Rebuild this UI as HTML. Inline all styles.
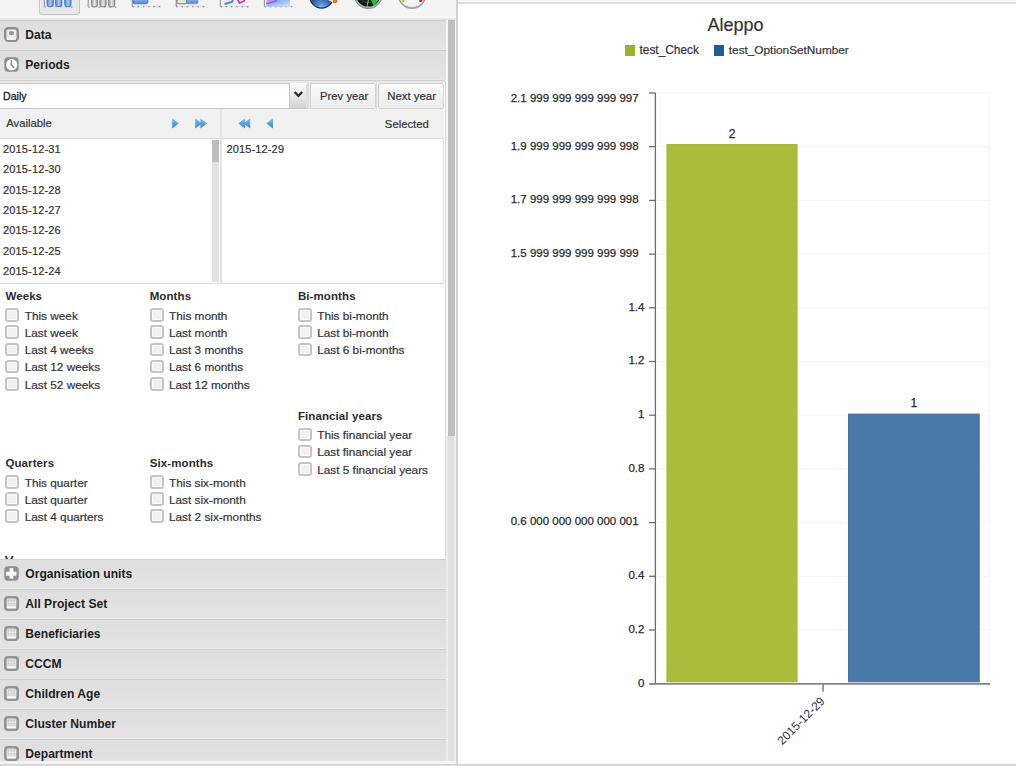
<!DOCTYPE html><html><head><meta charset="utf-8"><style>
html,body{margin:0;padding:0} body{width:1016px;height:766px;overflow:hidden;position:relative;background:#fff;font-family:"Liberation Sans", sans-serif}
.t{position:absolute;white-space:nowrap}
.cb{position:absolute;width:14px;height:13.6px;box-sizing:border-box;border:2px solid #c4c4c4;border-radius:3px;background:#f1f1f1;box-shadow:inset 0 0 0 1px #fbfbfb}
</style></head><body>
<div style="position:absolute;left:0.00px;top:0.00px;width:456.00px;height:15.50px;background:#f3f3f3"></div>
<div style="position:absolute;left:0.00px;top:15.50px;width:456.00px;height:2.50px;background:#f7f7f7"></div>
<div style="position:absolute;left:0.00px;top:18.00px;width:456.00px;height:2.00px;background:linear-gradient(#f0f0f0,#dcdcdc)"></div>
<div style="position:absolute;left:38.80px;top:-2.00px;width:41.50px;height:16.80px;background:#e8e8e8;border:1px solid #c6c6c6;border-radius:0 0 3px 3px;box-sizing:border-box"></div>
<svg style="position:absolute;left:0;top:0" width="456" height="19" viewBox="0 0 456 19"><defs><linearGradient id="bb" x1="0" y1="0" x2="1" y2="0"><stop offset="0" stop-color="#4f86d2"/><stop offset="0.5" stop-color="#a9c8f0"/><stop offset="1" stop-color="#5a8fd8"/></linearGradient><linearGradient id="gg" x1="0" y1="0" x2="1" y2="0"><stop offset="0" stop-color="#9a9a9a"/><stop offset="0.5" stop-color="#e6e6e6"/><stop offset="1" stop-color="#a0a0a0"/></linearGradient><linearGradient id="hb" x1="0" y1="0" x2="0" y2="1"><stop offset="0" stop-color="#a8c6ef"/><stop offset="1" stop-color="#4f86d2"/></linearGradient><linearGradient id="ga" x1="0" y1="0" x2="1" y2="1"><stop offset="0" stop-color="#5d95e6"/><stop offset="1" stop-color="#d5e5fb"/></linearGradient><radialGradient id="gp" cx="0.5" cy="0.95" r="0.6"><stop offset="0" stop-color="#7ec8ec"/><stop offset="0.25" stop-color="#5a8ad0"/><stop offset="1" stop-color="#1c3f80"/></radialGradient></defs><path d="M44.3 0 V6.8" stroke="#888" stroke-width="1"/><path d="M44.3 6.8 H73" stroke="#6e6e6e" stroke-width="1.1" stroke-dasharray="1.5 3.8"/><path d="M44.3 6.3999999999999995 H73" stroke="#c8c8c8" stroke-width="0.6"/><rect x="47.1" y="-4" width="6.2" height="10.6" rx="2.2" fill="url(#bb)" stroke="#3c6fc0" stroke-width="0.9"/><rect x="55.6" y="-4" width="6.2" height="10.6" rx="2.2" fill="url(#bb)" stroke="#3c6fc0" stroke-width="0.9"/><rect x="64.8" y="-4" width="6.2" height="10.6" rx="2.2" fill="url(#bb)" stroke="#3c6fc0" stroke-width="0.9"/><path d="M88.2 0 V7" stroke="#888" stroke-width="1"/><path d="M88.2 7 H117" stroke="#6e6e6e" stroke-width="1.1" stroke-dasharray="1.5 3.8"/><path d="M88.2 6.6 H117" stroke="#c8c8c8" stroke-width="0.6"/><rect x="91.4" y="-4" width="6.2" height="10.8" rx="2.2" fill="url(#gg)" stroke="#7a7a7a" stroke-width="0.9"/><rect x="99.9" y="-4" width="6.2" height="10.8" rx="2.2" fill="url(#gg)" stroke="#7a7a7a" stroke-width="0.9"/><rect x="108.6" y="-4" width="6.2" height="10.8" rx="2.2" fill="url(#gg)" stroke="#7a7a7a" stroke-width="0.9"/><path d="M132.2 0 V6.6" stroke="#888" stroke-width="1"/><path d="M132.2 6.6 H161" stroke="#6e6e6e" stroke-width="1.1" stroke-dasharray="1.5 3.8"/><path d="M132.2 6.199999999999999 H161" stroke="#c8c8c8" stroke-width="0.6"/><rect x="133" y="-3" width="14.8" height="6.8" rx="1.6" fill="url(#hb)" stroke="#3c6fc0" stroke-width="0.9"/><path d="M176.2 0 V6.6" stroke="#888" stroke-width="1"/><path d="M176.2 6.6 H205" stroke="#6e6e6e" stroke-width="1.1" stroke-dasharray="1.5 3.8"/><path d="M176.2 6.199999999999999 H205" stroke="#c8c8c8" stroke-width="0.6"/><rect x="186" y="-3" width="12" height="6.8" rx="1.6" fill="url(#hb)" stroke="#6d9ad8" stroke-width="0.8"/><rect x="177" y="-3" width="9.5" height="6.8" rx="1.2" fill="#e4e4e4" stroke="#6a6a6a" stroke-width="0.9"/><path d="M220.3 0 V6.6" stroke="#888" stroke-width="1"/><path d="M220.3 6.6 H249" stroke="#6e6e6e" stroke-width="1.1" stroke-dasharray="1.5 3.8"/><path d="M220.3 6.199999999999999 H249" stroke="#c8c8c8" stroke-width="0.6"/><path d="M224.5 4 L232 2 L233 -1" stroke="#3f8ae6" stroke-width="2" fill="none"/><path d="M222.5 2 L230 0" stroke="#f8d8d0" stroke-width="1.2" fill="none"/><path d="M237.5 -1 L239.5 3 L244 1 L245 -1" stroke="#cc3ab8" stroke-width="1.8" fill="none"/><path d="M264.4 0 V6.8" stroke="#888" stroke-width="1"/><path d="M264.4 6.8 H293" stroke="#6e6e6e" stroke-width="1.1" stroke-dasharray="1.5 3.8"/><path d="M264.4 6.3999999999999995 H293" stroke="#c8c8c8" stroke-width="0.6"/><path d="M266.5 6.5 L266.5 2 L276 -1 L290 -1 L290 6.5 Z" fill="url(#ga)"/><path d="M266.5 3.5 L276 0.5 L278 -1 L266.5 -1 Z" fill="#e884e8"/><path d="M266.5 3.8 L276 0.8 L277.5 -1" stroke="#4a7ee0" stroke-width="1.4" fill="none"/><circle cx="321.6" cy="-3.6" r="12.6" fill="#fafafa"/><circle cx="321.6" cy="-3.8" r="11.9" fill="url(#gp)" stroke="#0f2c62" stroke-width="1.2"/><path d="M321.6 -3.8 L336 -4 L334.5 3.5 Z" fill="#f3f3f3"/><circle cx="335" cy="1" r="2" fill="#e68a10" stroke="#b05010" stroke-width="0.6"/><circle cx="368.2" cy="-5.4" r="14.1" fill="#b0b0b0" stroke="#8a8a8a" stroke-width="1"/><circle cx="368.2" cy="-5.8" r="12.4" fill="#0d1a10"/><circle cx="368.2" cy="-5.8" r="8.5" fill="none" stroke="#2f5a32" stroke-width="0.9"/><path d="M368.2 -5.8 L381 -4 L374 6.2 Z" fill="#28c040"/><path d="M371 -14 L367 7" stroke="#9ab09a" stroke-width="1"/><circle cx="412" cy="-5.6" r="13.7" fill="#ececec" stroke="#a2a2a2" stroke-width="1.6"/><circle cx="412" cy="-6.2" r="12" fill="#f4f4f4"/><circle cx="403.2" cy="0.8" r="1.4" fill="#a0d020"/><circle cx="420.8" cy="0.6" r="1.5" fill="#d81818"/></svg>
<div style="position:absolute;left:0.00px;top:20.00px;width:445.60px;height:1.00px;background:#cecece"></div>
<div style="position:absolute;left:0.00px;top:21.00px;width:445.60px;height:29.00px;background:linear-gradient(#dedede,#e4e4e4)"></div>
<svg style="position:absolute;left:4.4px;top:26.9px" width="15" height="15" viewBox="0 0 15 15"><rect x="1.2" y="1.2" width="12.6" height="12.6" rx="3" fill="#e6e6e6" stroke="#8e8e8e" stroke-width="2.4"/><rect x="4.2" y="3.3" width="6.6" height="5.6" rx="1" fill="none" stroke="#f5f5f5" stroke-width="1"/><rect x="5" y="4.3" width="4.8" height="3.8" rx="1" fill="#969696"/><rect x="2.8" y="10.9" width="7" height="2" fill="#fff"/><rect x="10.3" y="10.9" width="1.6" height="2" fill="#f4f4f4"/></svg>
<div class="t" style="left:25.30px;top:28.66px;font-size:12.1px;line-height:12.1px;font-weight:bold;color:#1e1e1e;">Data</div>
<div style="position:absolute;left:0.00px;top:49.00px;width:445.60px;height:1.00px;background:#e8e8e8"></div>
<div style="position:absolute;left:0.00px;top:50.00px;width:445.60px;height:1.00px;background:#cecece"></div>
<div style="position:absolute;left:0.00px;top:51.00px;width:445.60px;height:29.00px;background:linear-gradient(#dedede,#e4e4e4)"></div>
<svg style="position:absolute;left:4.4px;top:56.9px" width="15" height="15" viewBox="0 0 15 15"><rect x="0.3" y="0.3" width="14.4" height="14.4" rx="3.6" fill="#8e8e8e"/><circle cx="7.7" cy="7.7" r="5.6" fill="#fff"/><path d="M7.3 3.7 V7.6 L9.6 10.3" stroke="#8e8e8e" stroke-width="1.6" fill="none" stroke-linecap="round"/></svg>
<div class="t" style="left:25.30px;top:58.66px;font-size:12.1px;line-height:12.1px;font-weight:bold;color:#1e1e1e;">Periods</div>
<div style="position:absolute;left:0.00px;top:79.00px;width:445.00px;height:1.00px;background:#e8e8e8"></div>
<div style="position:absolute;left:0.00px;top:80.00px;width:445.00px;height:1.00px;background:#d0d0d0"></div>
<div style="position:absolute;left:0.00px;top:81.00px;width:445.00px;height:2.00px;background:#e8e8e8"></div>
<div style="position:absolute;left:0.00px;top:83.00px;width:290.40px;height:25.50px;background:linear-gradient(#f3f3f3,#fff 6px);border:1px solid #c2c6d6;border-left:none;box-sizing:border-box"></div>
<div class="t" style="left:3.00px;top:90.73px;font-size:10.6px;line-height:10.6px;font-weight:normal;color:#1a1a1a;-webkit-text-stroke:0.3px #1a1a1a">Daily</div>
<div style="position:absolute;left:290.40px;top:83.50px;width:16.60px;height:25.00px;background:linear-gradient(#fbfbfb,#d4d4d4);border-bottom:1px solid #c2c6d6;border-right:1px solid #e0e0e0;box-sizing:border-box"></div>
<div style="position:absolute;left:307.00px;top:83.00px;width:4.00px;height:26.00px;background:#dedede"></div>
<div style="position:absolute;left:308.60px;top:83.00px;width:1.00px;height:26.00px;background:#ececec"></div>
<svg style="position:absolute;left:293px;top:89.7px" width="11" height="9" viewBox="0 0 11 9"><path d="M1.6 2 L5.4 5.8 L9.2 2" stroke="#2a2a2a" stroke-width="2.3" fill="none"/></svg>
<div style="position:absolute;left:310.00px;top:83.00px;width:66.00px;height:26.00px;background:linear-gradient(#fafafa,#ececec);border:1px solid #d2d2d2;border-radius:2px;box-sizing:border-box"></div>
<div class="t" style="left:144.20px;width:400px;text-align:center;top:91.33px;font-size:11.3px;line-height:11.3px;font-weight:normal;color:#333;-webkit-text-stroke:0.2px #333;">Prev year</div>
<div style="position:absolute;left:375.80px;top:83.00px;width:2.40px;height:26.00px;background:#dedede"></div>
<div style="position:absolute;left:376.50px;top:83.00px;width:1.00px;height:26.00px;background:#ececec"></div>
<div style="position:absolute;left:378.00px;top:83.00px;width:65.50px;height:26.00px;background:linear-gradient(#fafafa,#ececec);border:1px solid #d2d2d2;border-radius:2px;box-sizing:border-box"></div>
<div class="t" style="left:211.60px;width:400px;text-align:center;top:91.25px;font-size:11.4px;line-height:11.4px;font-weight:normal;color:#333;-webkit-text-stroke:0.2px #333;">Next year</div>
<div style="position:absolute;left:0.00px;top:109.00px;width:443.50px;height:28.50px;background:#f1f1f1"></div>
<div style="position:absolute;left:0.00px;top:137.50px;width:443.50px;height:1.00px;background:#d9d9d9"></div>
<div style="position:absolute;left:220.00px;top:109.00px;width:1.50px;height:174.50px;background:#e3e3e3"></div>
<div class="t" style="left:6.20px;top:118.33px;font-size:11.3px;line-height:11.3px;font-weight:normal;color:#333;-webkit-text-stroke:0.2px #333;">Available</div>
<div class="t" style="right:587.20px;text-align:right;top:118.53px;font-size:11.3px;line-height:11.3px;font-weight:normal;color:#333;-webkit-text-stroke:0.2px #333;">Selected</div>
<svg style="position:absolute;left:0;top:0" width="456" height="140"><defs><linearGradient id="gb" x1="0" y1="0" x2="0" y2="1"><stop offset="0" stop-color="#78c2f6"/><stop offset="1" stop-color="#3583d2"/></linearGradient></defs><path d="M172.2 118.2 L178.89999999999998 123.4 L172.2 128.6 Z" fill="url(#gb)"/><path d="M195.2 118.2 L201.89999999999998 123.4 L195.2 128.6 Z M200.4 118.2 L207.1 123.4 L200.4 128.6 Z" fill="url(#gb)"/><path d="M245.0 118.2 L238.3 123.4 L245.0 128.6 Z M250.2 118.2 L243.5 123.4 L250.2 128.6 Z" fill="url(#gb)"/><path d="M273.0 118.2 L266.3 123.4 L273.0 128.6 Z" fill="url(#gb)"/></svg>
<div style="position:absolute;left:212.00px;top:140.00px;width:7.00px;height:22.00px;background:#bcbcbc"></div>
<div style="position:absolute;left:212.00px;top:162.00px;width:7.00px;height:120.00px;background:#e2e2e2"></div>
<div class="t" style="left:3.00px;top:144.19px;font-size:11px;line-height:11px;font-weight:normal;color:#333;letter-spacing:0.15px;-webkit-text-stroke:0.2px #333;">2015-12-31</div>
<div class="t" style="left:3.00px;top:164.47px;font-size:11px;line-height:11px;font-weight:normal;color:#333;letter-spacing:0.15px;-webkit-text-stroke:0.2px #333;">2015-12-30</div>
<div class="t" style="left:3.00px;top:184.75px;font-size:11px;line-height:11px;font-weight:normal;color:#333;letter-spacing:0.15px;-webkit-text-stroke:0.2px #333;">2015-12-28</div>
<div class="t" style="left:3.00px;top:205.03px;font-size:11px;line-height:11px;font-weight:normal;color:#333;letter-spacing:0.15px;-webkit-text-stroke:0.2px #333;">2015-12-27</div>
<div class="t" style="left:3.00px;top:225.31px;font-size:11px;line-height:11px;font-weight:normal;color:#333;letter-spacing:0.15px;-webkit-text-stroke:0.2px #333;">2015-12-26</div>
<div class="t" style="left:3.00px;top:245.59px;font-size:11px;line-height:11px;font-weight:normal;color:#333;letter-spacing:0.15px;-webkit-text-stroke:0.2px #333;">2015-12-25</div>
<div class="t" style="left:3.00px;top:265.87px;font-size:11px;line-height:11px;font-weight:normal;color:#333;letter-spacing:0.15px;-webkit-text-stroke:0.2px #333;">2015-12-24</div>
<div class="t" style="left:226.40px;top:143.99px;font-size:11px;line-height:11px;font-weight:normal;color:#333;letter-spacing:0.15px;-webkit-text-stroke:0.2px #333;">2015-12-29</div>
<div style="position:absolute;left:0.00px;top:283.00px;width:443.80px;height:1.20px;background:#dadada"></div>
<div style="position:absolute;left:442.80px;top:138.00px;width:1.00px;height:146.00px;background:#dcdcdc"></div>
<div class="t" style="left:5.40px;top:291.27px;font-size:11.5px;line-height:11.5px;font-weight:bold;color:#2c2a30;letter-spacing:0.1px">Weeks</div>
<div class="cb" style="left:5.40px;top:308.10px"></div>
<div class="t" style="left:24.70px;top:310.71px;font-size:11.8px;line-height:11.8px;font-weight:normal;color:#34323a;-webkit-text-stroke:0.2px #34323a;">This week</div>
<div class="cb" style="left:5.40px;top:325.32px"></div>
<div class="t" style="left:24.70px;top:327.93px;font-size:11.8px;line-height:11.8px;font-weight:normal;color:#34323a;-webkit-text-stroke:0.2px #34323a;">Last week</div>
<div class="cb" style="left:5.40px;top:342.54px"></div>
<div class="t" style="left:24.70px;top:345.15px;font-size:11.8px;line-height:11.8px;font-weight:normal;color:#34323a;-webkit-text-stroke:0.2px #34323a;">Last 4 weeks</div>
<div class="cb" style="left:5.40px;top:359.76px"></div>
<div class="t" style="left:24.70px;top:362.37px;font-size:11.8px;line-height:11.8px;font-weight:normal;color:#34323a;-webkit-text-stroke:0.2px #34323a;">Last 12 weeks</div>
<div class="cb" style="left:5.40px;top:376.98px"></div>
<div class="t" style="left:24.70px;top:379.59px;font-size:11.8px;line-height:11.8px;font-weight:normal;color:#34323a;-webkit-text-stroke:0.2px #34323a;">Last 52 weeks</div>
<div class="t" style="left:149.70px;top:291.27px;font-size:11.5px;line-height:11.5px;font-weight:bold;color:#2c2a30;letter-spacing:0.1px">Months</div>
<div class="cb" style="left:149.70px;top:308.10px"></div>
<div class="t" style="left:169.00px;top:310.71px;font-size:11.8px;line-height:11.8px;font-weight:normal;color:#34323a;-webkit-text-stroke:0.2px #34323a;">This month</div>
<div class="cb" style="left:149.70px;top:325.32px"></div>
<div class="t" style="left:169.00px;top:327.93px;font-size:11.8px;line-height:11.8px;font-weight:normal;color:#34323a;-webkit-text-stroke:0.2px #34323a;">Last month</div>
<div class="cb" style="left:149.70px;top:342.54px"></div>
<div class="t" style="left:169.00px;top:345.15px;font-size:11.8px;line-height:11.8px;font-weight:normal;color:#34323a;-webkit-text-stroke:0.2px #34323a;">Last 3 months</div>
<div class="cb" style="left:149.70px;top:359.76px"></div>
<div class="t" style="left:169.00px;top:362.37px;font-size:11.8px;line-height:11.8px;font-weight:normal;color:#34323a;-webkit-text-stroke:0.2px #34323a;">Last 6 months</div>
<div class="cb" style="left:149.70px;top:376.98px"></div>
<div class="t" style="left:169.00px;top:379.59px;font-size:11.8px;line-height:11.8px;font-weight:normal;color:#34323a;-webkit-text-stroke:0.2px #34323a;">Last 12 months</div>
<div class="t" style="left:297.90px;top:291.27px;font-size:11.5px;line-height:11.5px;font-weight:bold;color:#2c2a30;letter-spacing:0.1px">Bi-months</div>
<div class="cb" style="left:297.90px;top:308.10px"></div>
<div class="t" style="left:317.20px;top:310.71px;font-size:11.8px;line-height:11.8px;font-weight:normal;color:#34323a;-webkit-text-stroke:0.2px #34323a;">This bi-month</div>
<div class="cb" style="left:297.90px;top:325.32px"></div>
<div class="t" style="left:317.20px;top:327.93px;font-size:11.8px;line-height:11.8px;font-weight:normal;color:#34323a;-webkit-text-stroke:0.2px #34323a;">Last bi-month</div>
<div class="cb" style="left:297.90px;top:342.54px"></div>
<div class="t" style="left:317.20px;top:345.15px;font-size:11.8px;line-height:11.8px;font-weight:normal;color:#34323a;-webkit-text-stroke:0.2px #34323a;">Last 6 bi-months</div>
<div class="t" style="left:297.90px;top:410.77px;font-size:11.5px;line-height:11.5px;font-weight:bold;color:#2c2a30;letter-spacing:0.1px">Financial years</div>
<div class="cb" style="left:297.90px;top:427.60px"></div>
<div class="t" style="left:317.20px;top:430.21px;font-size:11.8px;line-height:11.8px;font-weight:normal;color:#34323a;-webkit-text-stroke:0.2px #34323a;">This financial year</div>
<div class="cb" style="left:297.90px;top:444.82px"></div>
<div class="t" style="left:317.20px;top:447.43px;font-size:11.8px;line-height:11.8px;font-weight:normal;color:#34323a;-webkit-text-stroke:0.2px #34323a;">Last financial year</div>
<div class="cb" style="left:297.90px;top:462.04px"></div>
<div class="t" style="left:317.20px;top:464.65px;font-size:11.8px;line-height:11.8px;font-weight:normal;color:#34323a;-webkit-text-stroke:0.2px #34323a;">Last 5 financial years</div>
<div class="t" style="left:5.40px;top:458.17px;font-size:11.5px;line-height:11.5px;font-weight:bold;color:#2c2a30;letter-spacing:0.1px">Quarters</div>
<div class="cb" style="left:5.40px;top:475.00px"></div>
<div class="t" style="left:24.70px;top:477.61px;font-size:11.8px;line-height:11.8px;font-weight:normal;color:#34323a;-webkit-text-stroke:0.2px #34323a;">This quarter</div>
<div class="cb" style="left:5.40px;top:492.22px"></div>
<div class="t" style="left:24.70px;top:494.83px;font-size:11.8px;line-height:11.8px;font-weight:normal;color:#34323a;-webkit-text-stroke:0.2px #34323a;">Last quarter</div>
<div class="cb" style="left:5.40px;top:509.44px"></div>
<div class="t" style="left:24.70px;top:512.05px;font-size:11.8px;line-height:11.8px;font-weight:normal;color:#34323a;-webkit-text-stroke:0.2px #34323a;">Last 4 quarters</div>
<div class="t" style="left:149.70px;top:458.17px;font-size:11.5px;line-height:11.5px;font-weight:bold;color:#2c2a30;letter-spacing:0.1px">Six-months</div>
<div class="cb" style="left:149.70px;top:475.00px"></div>
<div class="t" style="left:169.00px;top:477.61px;font-size:11.8px;line-height:11.8px;font-weight:normal;color:#34323a;-webkit-text-stroke:0.2px #34323a;">This six-month</div>
<div class="cb" style="left:149.70px;top:492.22px"></div>
<div class="t" style="left:169.00px;top:494.83px;font-size:11.8px;line-height:11.8px;font-weight:normal;color:#34323a;-webkit-text-stroke:0.2px #34323a;">Last six-month</div>
<div class="cb" style="left:149.70px;top:509.44px"></div>
<div class="t" style="left:169.00px;top:512.05px;font-size:11.8px;line-height:11.8px;font-weight:normal;color:#34323a;-webkit-text-stroke:0.2px #34323a;">Last 2 six-months</div>
<svg style="position:absolute;left:0;top:550.8px" width="20" height="9" viewBox="0 0 20 9"><path d="M5.6 5 L8 10 M12.8 5 L10.4 10" stroke="#3a3a48" stroke-width="1.9" fill="none"/></svg>
<div style="position:absolute;left:444.60px;top:81.00px;width:1.20px;height:477.00px;background:#d8d8d8"></div>
<div style="position:absolute;left:0.00px;top:559.00px;width:445.60px;height:1.00px;background:#cecece"></div>
<div style="position:absolute;left:0.00px;top:560.00px;width:445.60px;height:29.00px;background:linear-gradient(#dedede,#e4e4e4)"></div>
<svg style="position:absolute;left:4.4px;top:565.9px" width="15" height="15" viewBox="0 0 15 15"><rect x="0.3" y="0.3" width="14.4" height="14.4" rx="3.6" fill="#8f8f8f"/><rect x="5.6" y="2.2" width="3.8" height="10.4" fill="#fff"/><rect x="2.2" y="5.7" width="10.3" height="4" fill="#fff"/></svg>
<div class="t" style="left:25.30px;top:567.66px;font-size:12.1px;line-height:12.1px;font-weight:bold;color:#1e1e1e;">Organisation units</div>
<div style="position:absolute;left:0.00px;top:588.00px;width:445.60px;height:1.00px;background:#e8e8e8"></div>
<div style="position:absolute;left:0.00px;top:589.00px;width:445.60px;height:1.00px;background:#cecece"></div>
<div style="position:absolute;left:0.00px;top:590.00px;width:445.60px;height:29.00px;background:linear-gradient(#dedede,#e4e4e4)"></div>
<svg style="position:absolute;left:4.4px;top:595.9px" width="15" height="15" viewBox="0 0 15 15"><rect x="1.3" y="1.3" width="12.4" height="12.4" rx="2.8" fill="#e9e9e9" stroke="#939393" stroke-width="2.6"/><rect x="3.6" y="3.3" width="1.8" height="2.4" fill="#c9c9c9"/><rect x="6.5" y="3.3" width="1.9" height="2.4" fill="#c9c9c9"/><rect x="9.4" y="3.3" width="1.9" height="2.4" fill="#c9c9c9"/><rect x="3.6" y="6.8" width="1.8" height="1.8" fill="#c9c9c9"/><rect x="6.5" y="6.8" width="1.9" height="1.8" fill="#c9c9c9"/><rect x="9.4" y="6.8" width="1.9" height="1.8" fill="#c9c9c9"/><rect x="3.2" y="9.3" width="8.6" height="0.8" fill="#d4d4d4"/><rect x="3.2" y="10.7" width="8.6" height="1.6" fill="#fcfcfc"/></svg>
<div class="t" style="left:25.30px;top:597.66px;font-size:12.1px;line-height:12.1px;font-weight:bold;color:#1e1e1e;">All Project Set</div>
<div style="position:absolute;left:0.00px;top:618.00px;width:445.60px;height:1.00px;background:#e8e8e8"></div>
<div style="position:absolute;left:0.00px;top:619.00px;width:445.60px;height:1.00px;background:#cecece"></div>
<div style="position:absolute;left:0.00px;top:620.00px;width:445.60px;height:29.00px;background:linear-gradient(#dedede,#e4e4e4)"></div>
<svg style="position:absolute;left:4.4px;top:625.9px" width="15" height="15" viewBox="0 0 15 15"><rect x="1.3" y="1.3" width="12.4" height="12.4" rx="2.8" fill="#e9e9e9" stroke="#939393" stroke-width="2.6"/><rect x="3.6" y="3.3" width="1.8" height="2.4" fill="#c9c9c9"/><rect x="6.5" y="3.3" width="1.9" height="2.4" fill="#c9c9c9"/><rect x="9.4" y="3.3" width="1.9" height="2.4" fill="#c9c9c9"/><rect x="3.6" y="6.8" width="1.8" height="1.8" fill="#c9c9c9"/><rect x="6.5" y="6.8" width="1.9" height="1.8" fill="#c9c9c9"/><rect x="9.4" y="6.8" width="1.9" height="1.8" fill="#c9c9c9"/><rect x="3.2" y="9.3" width="8.6" height="0.8" fill="#d4d4d4"/><rect x="3.2" y="10.7" width="8.6" height="1.6" fill="#fcfcfc"/></svg>
<div class="t" style="left:25.30px;top:627.66px;font-size:12.1px;line-height:12.1px;font-weight:bold;color:#1e1e1e;">Beneficiaries</div>
<div style="position:absolute;left:0.00px;top:648.00px;width:445.60px;height:1.00px;background:#e8e8e8"></div>
<div style="position:absolute;left:0.00px;top:649.00px;width:445.60px;height:1.00px;background:#cecece"></div>
<div style="position:absolute;left:0.00px;top:650.00px;width:445.60px;height:29.00px;background:linear-gradient(#dedede,#e4e4e4)"></div>
<svg style="position:absolute;left:4.4px;top:655.9px" width="15" height="15" viewBox="0 0 15 15"><rect x="1.3" y="1.3" width="12.4" height="12.4" rx="2.8" fill="#e9e9e9" stroke="#939393" stroke-width="2.6"/><rect x="3.6" y="3.3" width="1.8" height="2.4" fill="#c9c9c9"/><rect x="6.5" y="3.3" width="1.9" height="2.4" fill="#c9c9c9"/><rect x="9.4" y="3.3" width="1.9" height="2.4" fill="#c9c9c9"/><rect x="3.6" y="6.8" width="1.8" height="1.8" fill="#c9c9c9"/><rect x="6.5" y="6.8" width="1.9" height="1.8" fill="#c9c9c9"/><rect x="9.4" y="6.8" width="1.9" height="1.8" fill="#c9c9c9"/><rect x="3.2" y="9.3" width="8.6" height="0.8" fill="#d4d4d4"/><rect x="3.2" y="10.7" width="8.6" height="1.6" fill="#fcfcfc"/></svg>
<div class="t" style="left:25.30px;top:657.66px;font-size:12.1px;line-height:12.1px;font-weight:bold;color:#1e1e1e;">CCCM</div>
<div style="position:absolute;left:0.00px;top:678.00px;width:445.60px;height:1.00px;background:#e8e8e8"></div>
<div style="position:absolute;left:0.00px;top:679.00px;width:445.60px;height:1.00px;background:#cecece"></div>
<div style="position:absolute;left:0.00px;top:680.00px;width:445.60px;height:29.00px;background:linear-gradient(#dedede,#e4e4e4)"></div>
<svg style="position:absolute;left:4.4px;top:685.9px" width="15" height="15" viewBox="0 0 15 15"><rect x="1.3" y="1.3" width="12.4" height="12.4" rx="2.8" fill="#e9e9e9" stroke="#939393" stroke-width="2.6"/><rect x="3.6" y="3.3" width="1.8" height="2.4" fill="#c9c9c9"/><rect x="6.5" y="3.3" width="1.9" height="2.4" fill="#c9c9c9"/><rect x="9.4" y="3.3" width="1.9" height="2.4" fill="#c9c9c9"/><rect x="3.6" y="6.8" width="1.8" height="1.8" fill="#c9c9c9"/><rect x="6.5" y="6.8" width="1.9" height="1.8" fill="#c9c9c9"/><rect x="9.4" y="6.8" width="1.9" height="1.8" fill="#c9c9c9"/><rect x="3.2" y="9.3" width="8.6" height="0.8" fill="#d4d4d4"/><rect x="3.2" y="10.7" width="8.6" height="1.6" fill="#fcfcfc"/></svg>
<div class="t" style="left:25.30px;top:687.66px;font-size:12.1px;line-height:12.1px;font-weight:bold;color:#1e1e1e;">Children Age</div>
<div style="position:absolute;left:0.00px;top:708.00px;width:445.60px;height:1.00px;background:#e8e8e8"></div>
<div style="position:absolute;left:0.00px;top:709.00px;width:445.60px;height:1.00px;background:#cecece"></div>
<div style="position:absolute;left:0.00px;top:710.00px;width:445.60px;height:29.00px;background:linear-gradient(#dedede,#e4e4e4)"></div>
<svg style="position:absolute;left:4.4px;top:715.9px" width="15" height="15" viewBox="0 0 15 15"><rect x="1.3" y="1.3" width="12.4" height="12.4" rx="2.8" fill="#e9e9e9" stroke="#939393" stroke-width="2.6"/><rect x="3.6" y="3.3" width="1.8" height="2.4" fill="#c9c9c9"/><rect x="6.5" y="3.3" width="1.9" height="2.4" fill="#c9c9c9"/><rect x="9.4" y="3.3" width="1.9" height="2.4" fill="#c9c9c9"/><rect x="3.6" y="6.8" width="1.8" height="1.8" fill="#c9c9c9"/><rect x="6.5" y="6.8" width="1.9" height="1.8" fill="#c9c9c9"/><rect x="9.4" y="6.8" width="1.9" height="1.8" fill="#c9c9c9"/><rect x="3.2" y="9.3" width="8.6" height="0.8" fill="#d4d4d4"/><rect x="3.2" y="10.7" width="8.6" height="1.6" fill="#fcfcfc"/></svg>
<div class="t" style="left:25.30px;top:717.66px;font-size:12.1px;line-height:12.1px;font-weight:bold;color:#1e1e1e;">Cluster Number</div>
<div style="position:absolute;left:0.00px;top:738.00px;width:445.60px;height:1.00px;background:#e8e8e8"></div>
<div style="position:absolute;left:0.00px;top:739.00px;width:445.60px;height:1.00px;background:#cecece"></div>
<div style="position:absolute;left:0.00px;top:740.00px;width:445.60px;height:29.00px;background:linear-gradient(#dedede,#e4e4e4)"></div>
<svg style="position:absolute;left:4.4px;top:745.9px" width="15" height="15" viewBox="0 0 15 15"><rect x="1.3" y="1.3" width="12.4" height="12.4" rx="2.8" fill="#e9e9e9" stroke="#939393" stroke-width="2.6"/><rect x="3.6" y="3.3" width="1.8" height="2.4" fill="#c9c9c9"/><rect x="6.5" y="3.3" width="1.9" height="2.4" fill="#c9c9c9"/><rect x="9.4" y="3.3" width="1.9" height="2.4" fill="#c9c9c9"/><rect x="3.6" y="6.8" width="1.8" height="1.8" fill="#c9c9c9"/><rect x="6.5" y="6.8" width="1.9" height="1.8" fill="#c9c9c9"/><rect x="9.4" y="6.8" width="1.9" height="1.8" fill="#c9c9c9"/><rect x="3.2" y="9.3" width="8.6" height="0.8" fill="#d4d4d4"/><rect x="3.2" y="10.7" width="8.6" height="1.6" fill="#fcfcfc"/></svg>
<div class="t" style="left:25.30px;top:747.66px;font-size:12.1px;line-height:12.1px;font-weight:bold;color:#1e1e1e;">Department</div>
<div style="position:absolute;left:445.60px;top:20.00px;width:10.70px;height:744.00px;background:#f6f6f6"></div>
<div style="position:absolute;left:445.80px;top:436.00px;width:10.30px;height:325.00px;background:linear-gradient(90deg,#ebebeb 0,#ebebeb 2.2px,#e0e0e0 2.2px,#e0e0e0 7.8px,#efefef 7.8px)"></div>
<div style="position:absolute;left:447.50px;top:20.00px;width:7.40px;height:416.00px;background:#bdbdbd"></div>
<div style="position:absolute;left:456.30px;top:0.00px;width:1.80px;height:764.00px;background:#d3d3d3"></div>
<div style="position:absolute;left:0.00px;top:761.00px;width:456.00px;height:3.00px;background:#f3f3f3"></div>
<div style="position:absolute;left:0.00px;top:764.00px;width:1016.00px;height:2.00px;background:#d8d8d8"></div>
<div style="position:absolute;left:458.00px;top:0.00px;width:558.00px;height:1.50px;background:#f6f6f6"></div>
<div style="position:absolute;left:458.00px;top:1.50px;width:558.00px;height:2.10px;background:#dedede"></div>
<div class="t" style="left:535.50px;width:400px;text-align:center;top:15.56px;font-size:18px;line-height:18px;font-weight:normal;color:#333;-webkit-text-stroke:0.2px #333;">Aleppo</div>
<div style="position:absolute;left:624.70px;top:45.20px;width:10.50px;height:10.50px;background:#9db22a"></div>
<div class="t" style="left:639.50px;top:44.73px;font-size:11.9px;line-height:11.9px;font-weight:normal;color:#333;-webkit-text-stroke:0.2px #333;">test_Check</div>
<div style="position:absolute;left:713.80px;top:45.20px;width:10.50px;height:10.50px;background:#1f5a9a"></div>
<div class="t" style="left:728.80px;top:44.81px;font-size:11.8px;line-height:11.8px;font-weight:normal;color:#333;-webkit-text-stroke:0.2px #333;">test_OptionSetNumber</div>
<svg style="position:absolute;left:0;top:0" width="1016" height="766"><line x1="649" y1="683.70" x2="655.5" y2="683.70" stroke="#6e6e6e" stroke-width="1.3"/><line x1="657" y1="630.00" x2="988.6" y2="630.00" stroke="#f5f5f5" stroke-width="1"/><line x1="649" y1="630.00" x2="655.5" y2="630.00" stroke="#6e6e6e" stroke-width="1.3"/><line x1="657" y1="576.30" x2="988.6" y2="576.30" stroke="#f5f5f5" stroke-width="1"/><line x1="649" y1="576.30" x2="655.5" y2="576.30" stroke="#6e6e6e" stroke-width="1.3"/><line x1="657" y1="522.60" x2="988.6" y2="522.60" stroke="#f5f5f5" stroke-width="1"/><line x1="649" y1="522.60" x2="655.5" y2="522.60" stroke="#6e6e6e" stroke-width="1.3"/><line x1="657" y1="468.90" x2="988.6" y2="468.90" stroke="#f5f5f5" stroke-width="1"/><line x1="649" y1="468.90" x2="655.5" y2="468.90" stroke="#6e6e6e" stroke-width="1.3"/><line x1="657" y1="415.20" x2="988.6" y2="415.20" stroke="#f5f5f5" stroke-width="1"/><line x1="649" y1="415.20" x2="655.5" y2="415.20" stroke="#6e6e6e" stroke-width="1.3"/><line x1="657" y1="361.50" x2="988.6" y2="361.50" stroke="#f5f5f5" stroke-width="1"/><line x1="649" y1="361.50" x2="655.5" y2="361.50" stroke="#6e6e6e" stroke-width="1.3"/><line x1="657" y1="307.80" x2="988.6" y2="307.80" stroke="#f5f5f5" stroke-width="1"/><line x1="649" y1="307.80" x2="655.5" y2="307.80" stroke="#6e6e6e" stroke-width="1.3"/><line x1="657" y1="254.10" x2="988.6" y2="254.10" stroke="#f5f5f5" stroke-width="1"/><line x1="649" y1="254.10" x2="655.5" y2="254.10" stroke="#6e6e6e" stroke-width="1.3"/><line x1="657" y1="200.40" x2="988.6" y2="200.40" stroke="#f5f5f5" stroke-width="1"/><line x1="649" y1="200.40" x2="655.5" y2="200.40" stroke="#6e6e6e" stroke-width="1.3"/><line x1="657" y1="146.70" x2="988.6" y2="146.70" stroke="#f5f5f5" stroke-width="1"/><line x1="649" y1="146.70" x2="655.5" y2="146.70" stroke="#6e6e6e" stroke-width="1.3"/><line x1="657" y1="93.00" x2="988.6" y2="93.00" stroke="#f5f5f5" stroke-width="1"/><line x1="649" y1="93.00" x2="655.5" y2="93.00" stroke="#6e6e6e" stroke-width="1.3"/><line x1="988.6" y1="93" x2="988.6" y2="683" stroke="#f5f5f5" stroke-width="1"/><rect x="667" y="144.6" width="130" height="537.2" fill="#aabc3c" stroke="#a0b42c" stroke-width="1"/><rect x="848.6" y="414.1" width="130.6" height="267.7" fill="#4a7aa9" stroke="#3f6c9f" stroke-width="1"/><line x1="655.4" y1="93.00" x2="655.4" y2="684" stroke="#6e6e6e" stroke-width="1.3"/><line x1="649" y1="683.9" x2="990" y2="683.9" stroke="#858585" stroke-width="1.9"/><line x1="823.1" y1="684" x2="823.1" y2="691.7" stroke="#6e6e6e" stroke-width="1.3"/></svg>
<div class="t" style="right:371.60px;text-align:right;top:677.57px;font-size:11.5px;line-height:11.5px;font-weight:normal;color:#2a2a2a;-webkit-text-stroke:0.25px #2a2a2a">0</div>
<div class="t" style="right:371.60px;text-align:right;top:623.87px;font-size:11.5px;line-height:11.5px;font-weight:normal;color:#2a2a2a;-webkit-text-stroke:0.25px #2a2a2a">0.2</div>
<div class="t" style="right:371.60px;text-align:right;top:570.17px;font-size:11.5px;line-height:11.5px;font-weight:normal;color:#2a2a2a;-webkit-text-stroke:0.25px #2a2a2a">0.4</div>
<div class="t" style="right:377.40px;text-align:right;top:516.47px;font-size:11.5px;line-height:11.5px;font-weight:normal;color:#2a2a2a;-webkit-text-stroke:0.25px #2a2a2a">0.6 000 000 000 000 001</div>
<div class="t" style="right:371.60px;text-align:right;top:462.77px;font-size:11.5px;line-height:11.5px;font-weight:normal;color:#2a2a2a;-webkit-text-stroke:0.25px #2a2a2a">0.8</div>
<div class="t" style="right:371.60px;text-align:right;top:409.07px;font-size:11.5px;line-height:11.5px;font-weight:normal;color:#2a2a2a;-webkit-text-stroke:0.25px #2a2a2a">1</div>
<div class="t" style="right:371.60px;text-align:right;top:355.37px;font-size:11.5px;line-height:11.5px;font-weight:normal;color:#2a2a2a;-webkit-text-stroke:0.25px #2a2a2a">1.2</div>
<div class="t" style="right:371.60px;text-align:right;top:301.67px;font-size:11.5px;line-height:11.5px;font-weight:normal;color:#2a2a2a;-webkit-text-stroke:0.25px #2a2a2a">1.4</div>
<div class="t" style="right:377.40px;text-align:right;top:247.97px;font-size:11.5px;line-height:11.5px;font-weight:normal;color:#2a2a2a;-webkit-text-stroke:0.25px #2a2a2a">1.5 999 999 999 999 999</div>
<div class="t" style="right:377.40px;text-align:right;top:194.27px;font-size:11.5px;line-height:11.5px;font-weight:normal;color:#2a2a2a;-webkit-text-stroke:0.25px #2a2a2a">1.7 999 999 999 999 998</div>
<div class="t" style="right:377.40px;text-align:right;top:140.57px;font-size:11.5px;line-height:11.5px;font-weight:normal;color:#2a2a2a;-webkit-text-stroke:0.25px #2a2a2a">1.9 999 999 999 999 998</div>
<div class="t" style="right:377.40px;text-align:right;top:93.27px;font-size:11.5px;line-height:11.5px;font-weight:normal;color:#2a2a2a;-webkit-text-stroke:0.25px #2a2a2a">2.1 999 999 999 999 997</div>
<div class="t" style="left:532.10px;width:400px;text-align:center;top:127.67px;font-size:12.2px;line-height:12.2px;font-weight:normal;color:#2a2a2a;-webkit-text-stroke:0.25px #2a2a2a">2</div>
<div class="t" style="left:713.90px;width:400px;text-align:center;top:397.07px;font-size:12.2px;line-height:12.2px;font-weight:normal;color:#2a2a2a;-webkit-text-stroke:0.25px #2a2a2a">1</div>
<div class="t" style="left:0;top:0;font-size:12px;line-height:12px;color:#333;transform-origin:0 0;transform:translate(818.5px,695px) rotate(-45deg) translate(-100%,0)">2015-12-29</div>
</body></html>
